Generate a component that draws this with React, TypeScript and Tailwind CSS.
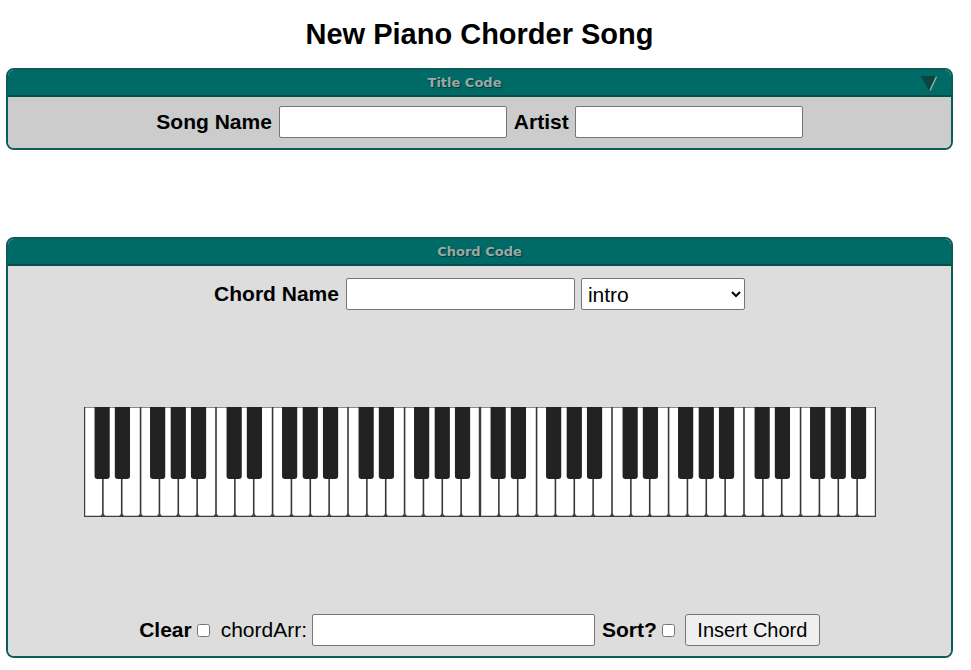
import React from 'react';

const WHITE_W = 396 / 21;
// black key offsets (px) relative to the boundary they sit on, per octave
const BLACKS: [number, number][] = [
  [1, -0.7],
  [2, 0.7],
  [4, -1.8],
  [5, 0],
  [6, 1.4],
];

const Piano: React.FC = () => {
  const dividers = Array.from({ length: 20 }, (_, i) => (i + 1) * WHITE_W);
  const blacks: number[] = [];
  for (let o = 0; o < 3; o++) {
    BLACKS.forEach(([b, off]) => blacks.push((o * 7 + b) * WHITE_W + off));
  }
  return (
    <svg width="396" height="110" viewBox="0 0 396 110" className="block">
      <rect x="0" y="0" width="396" height="110" fill="#ffffff" />
      <line x1="0" y1="0.5" x2="396" y2="0.5" stroke="#8a8a8a" strokeWidth="1" />
      <line x1="0.6" y1="0" x2="0.6" y2="110" stroke="#3a3a3a" strokeWidth="1.2" />
      <line x1="395.4" y1="0" x2="395.4" y2="110" stroke="#3a3a3a" strokeWidth="1.2" />
      <line x1="0" y1="109.4" x2="396" y2="109.4" stroke="#3a4040" strokeWidth="1.2" />
      {dividers.map((x, i) => (
        <g key={i}>
          <line x1={x} y1="0" x2={x} y2="110" stroke="#383838" strokeWidth="1.6" />
          <polygon points={`${x - 2.5},109 ${x + 2.5},109 ${x},106`} fill="#3a4a48" />
        </g>
      ))}
      {blacks.map((cx, i) => (
        <rect key={i} x={cx - 7.6} y="-4" width="15.2" height="76" rx="3" fill="#222222" />
      ))}
    </svg>
  );
};

const PanelHeader: React.FC<{ title: string; arrow?: boolean }> = ({ title, arrow }) => (
  <div
    className={`relative h-[27px] bg-[#006a66] border-b-2 border-[#0a4e4b] flex items-center justify-center ${
      arrow ? 'pr-[30px]' : ''
    }`}
  >
    <span className="font-['DejaVu_Sans',Verdana,sans-serif] text-[13px] font-bold text-[#9aaaa8] [text-shadow:1px_1px_1px_#043533]">
      {title}
    </span>
    {arrow && (
      <svg width="17" height="16" viewBox="0 0 17 16" className="absolute right-[13px] top-[6px]">
        <polygon points="0,0 16,0 8,15" fill="#0b4542" />
        <line x1="15.5" y1="0.5" x2="9" y2="14.5" stroke="#8fb3b0" strokeWidth="1.4" />
      </svg>
    )}
  </div>
);

export default function App() {
  return (
    <div className="w-[959px] min-h-[670px] bg-white font-['Liberation_Sans',Arial,sans-serif] text-black">
      <div className="h-[68px] flex items-center justify-center pt-[2px]">
        <h1 className="text-[29px] font-bold">New Piano Chorder Song</h1>
      </div>

      <div className="mx-[6px] w-[947px] border-2 border-[#0d5c58] rounded-[8px] overflow-hidden">
        <PanelHeader title="Title Code" arrow />
        <div className="bg-[#cccccc] pt-[9px] pb-[10px] flex items-center justify-center text-[21px] font-bold">
          <span>Song Name</span>
          <input className="ml-[7px] w-[228px] h-[32px] bg-white border border-[#767676] rounded-[2px]" />
          <span className="ml-[7px]">Artist</span>
          <input className="ml-[6px] w-[228px] h-[32px] bg-white border border-[#767676] rounded-[2px]" />
        </div>
      </div>

      <div className="h-[87px]" />

      <div className="mx-[6px] w-[947px] border-2 border-[#0d5c58] rounded-[8px] overflow-hidden">
        <PanelHeader title="Chord Code" />
        <div className="bg-[#dddddd] pt-[12px] pb-[10px] flex flex-col items-center">
          <div className="flex items-center text-[21px]">
            <span className="font-bold">Chord Name</span>
            <input className="ml-[7px] w-[229px] h-[32px] bg-white border border-[#767676] rounded-[2px]" />
            <select
              defaultValue="intro"
              className="ml-[6px] w-[164px] h-[32px] bg-white border border-[#767676] rounded-[2px] text-[21px] pl-[2px]"
            >
              <option value="intro">intro</option>
              <option value="verse">verse</option>
              <option value="chorus">chorus</option>
              <option value="bridge">bridge</option>
              <option value="outro">outro</option>
            </select>
          </div>

          <div className="mt-[97px] mb-[97px] flex">
            <Piano />
            <Piano />
          </div>

          <div className="flex items-center text-[21px]">
            <span className="font-bold">Clear</span>
            <input type="checkbox" className="ml-[5px] w-[13px] h-[13px] m-0" />
            <span className="ml-[11px]">chordArr:</span>
            <input className="ml-[5px] w-[283px] h-[32px] bg-white border border-[#767676] rounded-[2px]" />
            <span className="ml-[7px] font-bold">Sort?</span>
            <input type="checkbox" className="ml-[5px] w-[13px] h-[13px] m-0" />
            <button className="ml-[10px] w-[135px] h-[32px] bg-[#efefef] border border-[#767676] rounded-[3px] text-[20px]">
              Insert Chord
            </button>
          </div>
        </div>
      </div>
    </div>
  );
}
